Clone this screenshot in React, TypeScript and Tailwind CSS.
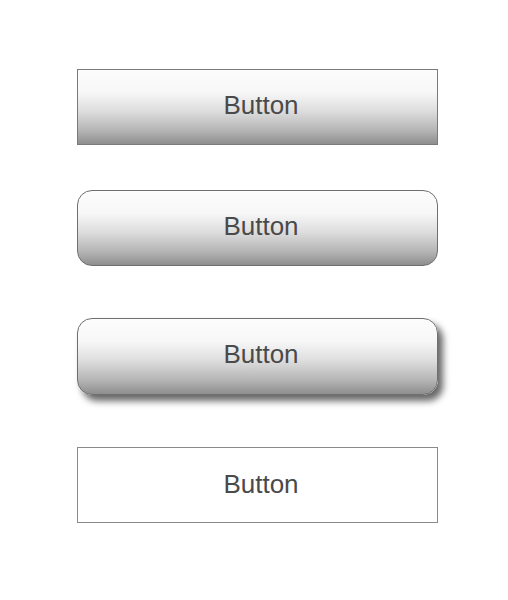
import React from 'react';

const grad =
  'bg-[linear-gradient(to_bottom,#fcfcfc_0%,#f7f7f7_30%,#dedede_55%,#b4b4b4_82%,#8e8e8e_100%)]';
const label =
  "font-['Liberation_Sans',Arial,sans-serif] text-[26px] text-[#4a4a4a] flex items-center justify-center pl-[7px]";

export default function App() {
  return (
    <div className="w-[508px] h-[600px] bg-white font-['Liberation_Sans',Arial,sans-serif]">
      <div className="flex flex-col pl-[77px] pt-[69px]">
        <button className={`w-[361px] h-[76px] border border-[#7a7a7a] ${grad} ${label} pb-[3px]`}>
          Button
        </button>
        <button
          className={`mt-[45px] w-[361px] h-[76px] border border-[#6f6f6f] rounded-[15px] ${grad} ${label} pb-[4px]`}
        >
          Button
        </button>
        <button
          className={`mt-[52px] w-[361px] h-[77px] border border-[#6f6f6f] rounded-[15px] ${grad} shadow-[5px_6px_7px_rgba(0,0,0,0.6)] ${label} pb-[5px]`}
        >
          Button
        </button>
        <button className={`mt-[52px] w-[361px] h-[76px] border border-[#8a8a8a] bg-white ${label} pb-[2px]`}>
          Button
        </button>
      </div>
    </div>
  );
}
